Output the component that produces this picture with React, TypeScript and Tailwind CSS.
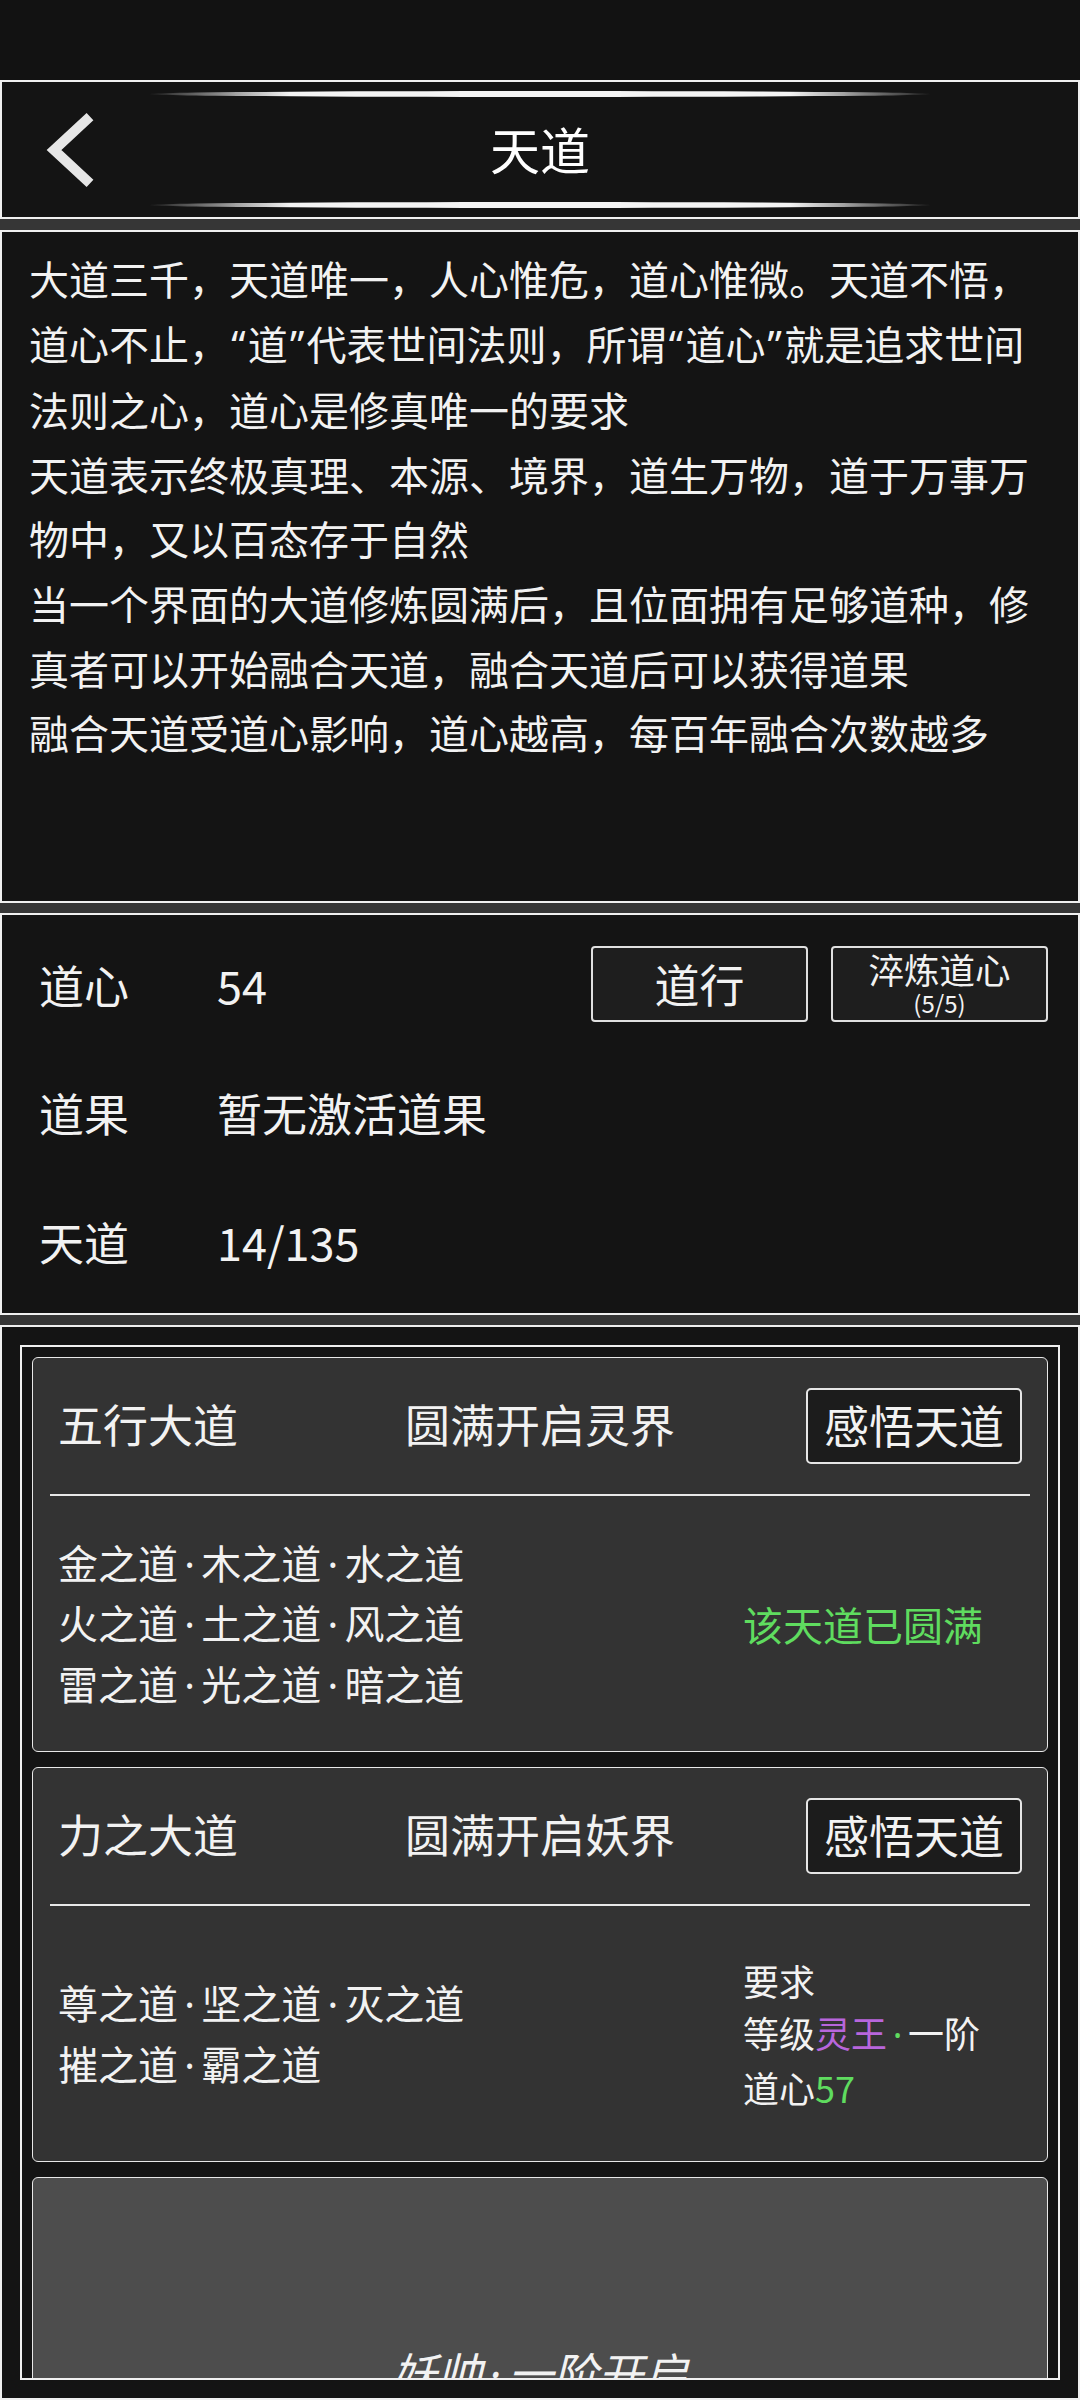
import React from "react";

const Dot = ({ className = "" }: { className?: string }) => (
  <span className={`inline-block w-[0.58em] text-center font-['Noto_Sans',sans-serif] ${className}`}>·</span>
);

const QL = () => (
  <span className="inline-block w-[0.47em] text-center font-['Noto_Sans',sans-serif]">“</span>
);
const QR = () => (
  <span className="inline-block w-[0.47em] text-center font-['Noto_Sans',sans-serif]">”</span>
);

function Card({
  title,
  realm,
  left,
  right,
}: {
  title: string;
  realm: string;
  left: React.ReactNode;
  right: React.ReactNode;
}) {
  return (
    <div className="h-[395px] shrink-0 rounded-[6px] border-[1.5px] border-[#e8e8e8] bg-[#333333] flex flex-col">
      <div className="h-[136px] shrink-0 grid grid-cols-[1fr_auto_1fr] items-center px-[25px]">
        <div className="text-[45px] leading-none mb-[6px]">{title}</div>
        <div className="text-[45px] leading-none mb-[6px]">{realm}</div>
        <div className="flex justify-end">
          <div className="w-[216px] h-[76px] rounded-[5px] border-2 border-[#e6e6e6] bg-[#1c1c1c] text-[45px] leading-none flex items-center justify-center pb-[3px]">
            感悟天道
          </div>
        </div>
      </div>
      <div className="mx-[17px] h-[2px] shrink-0 bg-[#e8e8e8]" />
      <div className="flex-1 flex items-center pl-[25px]">
        <div className="w-[685px] text-[40px] leading-[59.5px] whitespace-nowrap">{left}</div>
        <div className="whitespace-nowrap">{right}</div>
      </div>
    </div>
  );
}

export default function App() {
  return (
    <div className="w-[1080px] h-[2400px] bg-[#363636] flex flex-col overflow-hidden text-[#f2f2f2] font-['Noto_Sans_CJK_SC',sans-serif]">
      {/* status bar */}
      <div className="h-[80px] shrink-0 bg-[#121212]" />

      {/* header */}
      <div className="h-[139px] shrink-0 border-2 border-[#f0f0f0] bg-[#141414] flex flex-col items-center">
        <div className="mt-[9px] h-[6px] w-[780px] rounded-[50%] bg-[linear-gradient(90deg,rgba(255,255,255,0.05),#f4f4f4_18%,#f4f4f4_82%,rgba(255,255,255,0.05))]" />
        <div className="h-[105px] w-full grid grid-cols-[1fr_auto_1fr] items-center">
          <div className="flex items-center">
            <svg className="ml-[40px]" width="60" height="81" viewBox="0 0 60 81">
              <polyline
                points="48,7.7 12,41 48,74.3"
                fill="none"
                stroke="#e6e6e6"
                strokeWidth="10"
                strokeLinejoin="miter"
                strokeLinecap="butt"
              />
            </svg>
          </div>
          <div className="text-[50px] leading-none text-white mb-[4px]">天道</div>
          <div />
        </div>
        <div className="h-[6px] w-[780px] rounded-[50%] bg-[linear-gradient(90deg,rgba(255,255,255,0.05),#f4f4f4_18%,#f4f4f4_82%,rgba(255,255,255,0.05))]" />
      </div>

      {/* description */}
      <div className="mt-[11px] h-[673px] shrink-0 border-2 border-[#f0f0f0] bg-[#141414] px-[27px] pt-[14px] text-[40px] leading-[64.6px] whitespace-nowrap">
        <div>
          大道三千，天道唯一，人心惟危，道心惟微。天道不悟，
          <br />
          道心不止，<QL />道<QR />代表世间法则，所谓<QL />道心<QR />就是追求世间
          <br />
          法则之心，道心是修真唯一的要求
        </div>
        <div>
          天道表示终极真理、本源、境界，道生万物，道于万事万
          <br />
          物中，又以百态存于自然
        </div>
        <div>
          当一个界面的大道修炼圆满后，且位面拥有足够道种，修
          <br />
          真者可以开始融合天道，融合天道后可以获得道果
        </div>
        <div>融合天道受道心影响，道心越高，每百年融合次数越多</div>
      </div>

      {/* stats */}
      <div className="mt-[10px] h-[402px] shrink-0 border-2 border-[#f0f0f0] bg-[#141414] pl-[37px] pr-[30px] pt-[5px] text-[45px]">
        <div className="h-[128.5px] flex items-center">
          <div className="w-[178px] leading-none">道心</div>
          <div className="leading-none">54</div>
          <div className="ml-auto flex gap-[23px]">
            <div className="w-[217px] h-[76px] rounded-[4px] border-2 border-[#e0e0e0] bg-[#1e1e1e] flex items-center justify-center leading-none pb-[2px]">
              道行
            </div>
            <div className="w-[217px] h-[76px] rounded-[4px] border-2 border-[#e0e0e0] bg-[#1e1e1e] flex flex-col items-center justify-center">
              <div className="text-[35.5px] leading-[36px]">淬炼道心</div>
              <div className="text-[24px] leading-[28px] mt-[2px]">(5/5)</div>
            </div>
          </div>
        </div>
        <div className="h-[128.5px] flex items-center">
          <div className="w-[178px] leading-none">道果</div>
          <div className="leading-none">暂无激活道果</div>
        </div>
        <div className="h-[128.5px] flex items-center">
          <div className="w-[178px] leading-none">天道</div>
          <div className="leading-none">14/135</div>
        </div>
      </div>

      {/* list */}
      <div className="mt-[10px] flex-1 min-h-0 border-2 border-[#f0f0f0] bg-[#141414] p-[18px]">
        <div className="h-full border-2 border-[#f0f0f0] overflow-hidden p-[10px] flex flex-col gap-[15px]">
          <Card
            title="五行大道"
            realm="圆满开启灵界"
            left={
              <>
                <div>金之道<Dot />木之道<Dot />水之道</div>
                <div>火之道<Dot />土之道<Dot />风之道</div>
                <div>雷之道<Dot />光之道<Dot />暗之道</div>
              </>
            }
            right={<div className="text-[40px] text-[#5fdc5f]">该天道已圆满</div>}
          />
          <Card
            title="力之大道"
            realm="圆满开启妖界"
            left={
              <>
                <div>尊之道<Dot />坚之道<Dot />灭之道</div>
                <div>摧之道<Dot />霸之道</div>
              </>
            }
            right={
              <div className="text-[36px] leading-[52px]">
                <div>要求</div>
                <div>
                  等级<span className="text-[#b866dc]">灵王</span>
                  <Dot className="text-[#5fdc5f]" />一阶
                </div>
                <div>
                  道心<span className="text-[#5fdc5f]">57</span>
                </div>
              </div>
            }
          />
          <div className="h-[395px] shrink-0 rounded-[6px] border-[1.5px] border-[#e8e8e8] bg-[#4d4d4d] pt-[164px] text-center">
            <div className="text-[45px] leading-[60px] italic">妖帅<Dot />一阶开启</div>
          </div>
        </div>
      </div>
    </div>
  );
}
